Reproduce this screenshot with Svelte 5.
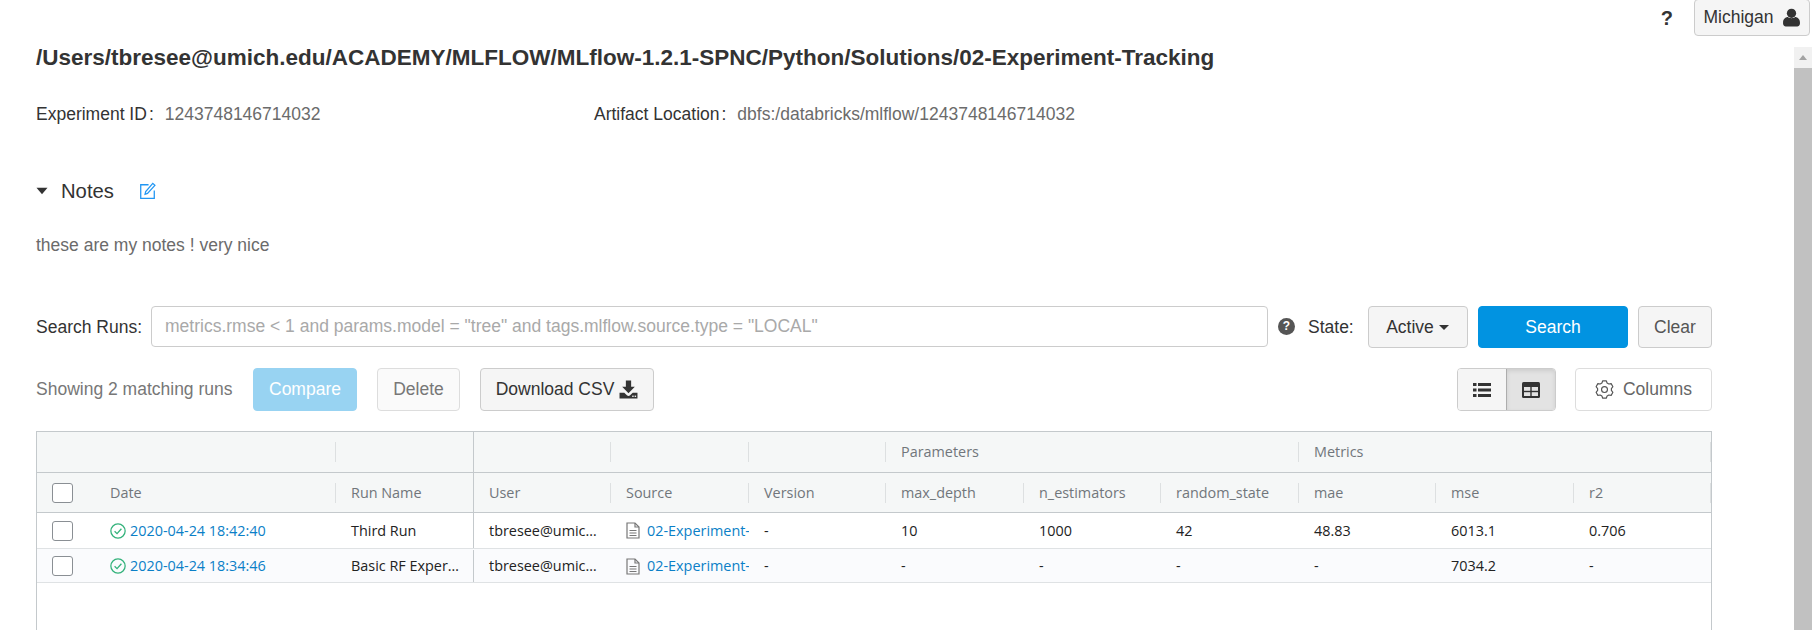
<script>
  const groupCols = [
    { label: '' }, { label: '', strong: true }, { label: '' }, { label: '' }, { label: '' },
    { label: 'Parameters' }, { label: 'Metrics' }
  ];
  const cols = ['Date', 'Run Name', 'User', 'Source', 'Version', 'max_depth', 'n_estimators', 'random_state', 'mae', 'mse', 'r2'];
  const rows = [
    { date: '2020-04-24 18:42:40', name: 'Third Run', vals: ['-', '10', '1000', '42', '48.83', '6013.1', '0.706'] },
    { date: '2020-04-24 18:34:46', name: 'Basic RF Exper…', vals: ['-', '-', '-', '-', '-', '7034.2', '-'] }
  ];
  function gear() {
    let d = '';
    const n = 6;
    for (let i = 0; i < n; i++) {
      const a = (i / n) * Math.PI * 2 + Math.PI / 6;
      const pts = [[-0.38, 6.6], [-0.2, 8.4], [0.2, 8.4], [0.38, 6.6]];
      for (const [o, r] of pts) {
        const x = 9 + r * Math.cos(a + o);
        const y = 9 + r * Math.sin(a + o);
        d += (d ? 'L' : 'M') + x.toFixed(2) + ' ' + y.toFixed(2);
      }
    }
    return d + 'Z';
  }
</script>

<div class="page">
  <header class="topbar">
    <span class="help">?</span>
    <button class="btn user">Michigan
      <svg width="19" height="19" viewBox="0 0 18 18"><circle cx="9" cy="5" r="4.4" fill="#333"/><path d="M1 13.5C1 10.5 3.500 8.500 5.500 8.500C7 10 11 10 12.500 8.500C14.500 8.500 17 10.500 17 13.500V15C17 16.500 15.500 17.500 14.500 17.500H3.500C2.500 17.500 1 16.500 1 15Z" fill="#333"/></svg>
    </button>
  </header>
  <div class="body">
    <main class="main">
      <h1>/Users/tbresee@umich.edu/ACADEMY/MLFLOW/MLflow-1.2.1-SPNC/Python/Solutions/02-Experiment-Tracking</h1>
      <div class="meta">
        <div class="meta-item"><span class="key">Experiment ID</span><span class="colon">:</span><span class="val">1243748146714032</span></div>
        <div class="meta-item"><span class="key">Artifact Location</span><span class="colon">:</span><span class="val">dbfs:/databricks/mlflow/1243748146714032</span></div>
      </div>
      <div class="notes-head">
        <svg class="caret" width="12" height="8" viewBox="0 0 12 8"><path d="M0.500 0.800H11.500L6 7.300Z" fill="#333"/></svg>
        <span class="notes-title">Notes</span>
        <svg class="edit" width="17" height="18" viewBox="0 0 16 17" fill="none" stroke="#2196f3" stroke-width="1.200"><path d="M9 2.600H1.600V15.400H14.400V8"/><path d="M13 1.300L15 3.200L8 10.800L5.700 11.600L6.300 9Z"/></svg>
      </div>
      <p class="notes-text">these are my notes ! very nice</p>

      <div class="search-row">
        <label class="search-label" for="q">Search Runs:</label>
        <input id="q" class="search-input" placeholder={'metrics.rmse < 1 and params.model = "tree" and tags.mlflow.source.type = "LOCAL"'} />
        <span class="qmark">?</span>
        <span class="state">State:</span>
        <button class="btn active">Active<i class="dd"></i></button>
        <button class="btn primary search">Search</button>
        <button class="btn clear">Clear</button>
      </div>

      <div class="action-row">
        <span class="count">Showing 2 matching runs</span>
        <button class="btn primary compare">Compare</button>
        <button class="btn delete">Delete</button>
        <button class="btn download">Download CSV
          <svg width="19" height="19" viewBox="0 0 18 18"><path d="M6.500 0.500H11.500V6.500H15L9 12.500L3 6.500H6.500Z" fill="#333"/><path d="M0.500 12H5L7.500 14.500C8.500 15.300 9.500 15.300 10.500 14.500L13 12H17.500V17.500H0.500Z" fill="#333"/><rect x="12.500" y="14.800" width="1.400" height="1.200" fill="#fff"/><rect x="14.800" y="14.800" width="1.400" height="1.200" fill="#fff"/></svg>
        </button>
        <span class="spacer"></span>
        <div class="toggle">
          <button class="tg" aria-label="List view">
            <svg width="18" height="16" viewBox="0 0 18 16" fill="#333"><rect x="0" y="1" width="3.500" height="3"/><rect x="0" y="6.500" width="3.500" height="3"/><rect x="0" y="12" width="3.500" height="3"/><rect x="5" y="1" width="13" height="3"/><rect x="5" y="6.500" width="13" height="3"/><rect x="5" y="12" width="13" height="3"/></svg>
          </button>
          <button class="tg on" aria-label="Table view">
            <svg width="18" height="16" viewBox="0 0 18 16"><rect x="0" y="0" width="18" height="16" rx="1.500" fill="#333"/><rect x="2" y="5" width="6.300" height="3.800" fill="#e3e3e3"/><rect x="9.700" y="5" width="6.300" height="3.800" fill="#e3e3e3"/><rect x="2" y="10.200" width="6.300" height="3.800" fill="#e3e3e3"/><rect x="9.700" y="10.200" width="6.300" height="3.800" fill="#e3e3e3"/></svg>
          </button>
        </div>
        <button class="btn columns">
          <svg width="19" height="19" viewBox="0 0 18 18" fill="none" stroke="#555" stroke-width="1.100" stroke-linejoin="round"><path d={gear()}/><circle cx="9" cy="9" r="2.800"/></svg>
          Columns
        </button>
      </div>

      <div class="table">
        <div class="grid group">
          {#each groupCols as g}
            <div class="hcell" class:strong={g.strong}>{g.label}</div>
          {/each}
        </div>
        <div class="grid heads">
          <div class="check-cell"><span class="box"></span></div>
          {#each cols as c, i}
            <div class="hcell" class:strong={i === 1}>{c}</div>
          {/each}
        </div>
        {#each rows as r, ri}
          <div class="grid row" class:alt={ri === 1}>
            <div class="check-cell"><span class="box"></span></div>
            <div class="cell date">
              <svg width="16" height="16" viewBox="0 0 15 15" fill="none" stroke="#33b27b" stroke-width="1.200"><circle cx="7.500" cy="7.500" r="6.700"/><path d="M4.300 7.700L6.600 10L10.700 5.400"/></svg>
              <a href="#run">{r.date}</a>
            </div>
            <div class="cell name">{r.name}</div>
            <div class="cell">tbresee@umic…</div>
            <div class="cell src">
              <svg width="14" height="17" viewBox="0 0 14 17" fill="none" stroke="#777" stroke-width="1.200"><path d="M1 1H9L13 5V16H1Z"/><path d="M9 1V5H13M3.500 8.500H10.500M3.500 11H10.500M3.500 13.500H10.500"/></svg>
              <a href="#src">02-Experiment-</a>
            </div>
            {#each r.vals as v}
              <div class="cell">{v}</div>
            {/each}
          </div>
        {/each}
      </div>
    </main>
    <aside class="scrollbar">
      <div class="sb-up"><i></i></div>
      <div class="sb-thumb"></div>
    </aside>
  </div>
</div>

<style>
  :global(body) { margin: 0; background: #fff; }
  .page {
    width: 1812px; height: 630px; overflow: hidden; display: flex; flex-direction: column;
    font-family: "Liberation Sans", Arial, sans-serif; font-size: 17.5px; color: #333;
  }
  .topbar { height: 36px; flex: none; display: flex; justify-content: flex-end; align-items: center; padding-right: 2px; gap: 21px; }
  .help { font-weight: 700; font-size: 20px; color: #333; }
  .btn {
    font: inherit; height: 42px; box-sizing: border-box; border: 1px solid #ccc; border-radius: 4px;
    background: #f5f5f5; color: #333; padding: 0; display: inline-flex; align-items: center; justify-content: center; gap: 6px;
  }
  .user { width: 116px; height: 37px; margin-top: -2px; gap: 8px; }
  .body { flex: 1; display: flex; min-height: 0; }
  .main { flex: 1; min-width: 0; padding: 10px 82px 0 36px; display: flex; flex-direction: column; }
  h1 { margin: 0; font-size: 22.5px; line-height: 24px; font-weight: 700; color: #333; white-space: nowrap; }
  .meta { display: flex; margin-top: 32px; height: 24px; align-items: center; }
  .meta-item { display: flex; align-items: center; }
  .meta-item:first-child { width: 558px; }
  .colon { margin: 0 11px 0 2px; }
  .val { color: #6b6b6b; }
  .notes-head { display: flex; align-items: center; margin-top: 50px; height: 30px; }
  .notes-title { font-size: 20.25px; margin: 0 25px 0 13px; }
  .notes-text { margin: 27px 0 0; line-height: 24px; color: #6b6b6b; }
  .search-row { display: flex; align-items: flex-start; margin-top: 49px; height: 42px; }
  .search-label, .state { line-height: 42px; }
  .search-label { width: 115px; flex: none; }
  .search-input {
    width: 1117px; height: 41px; box-sizing: border-box; border: 1px solid #ccc; border-radius: 4px; padding: 0 13px;
    font: inherit; flex: none; margin-right: 10px; outline: none;
  }
  .search-input::placeholder { color: #a9a9a9; opacity: 1; }
  .qmark {
    width: 17px; height: 17px; margin-top: 12px; border-radius: 50%; background: #555; color: #fff; font-size: 12px; font-weight: 700;
    text-align: center; line-height: 17px; flex: none;
  }
  .state { margin-left: 13px; width: 60px; flex: none; }
  .active { width: 100px; color: #333; padding-right: 1px; gap: 5px; }
  .dd { display: inline-block; border: 5px solid transparent; border-top-color: #333; border-bottom-width: 0; }
  .primary { background: #0193e1; border-color: #0193e1; color: #fff; }
  .search { width: 150px; margin-left: 10px; }
  .clear { width: 74px; margin-left: 10px; color: #555; }
  .action-row { display: flex; align-items: center; margin-top: 20px; height: 43px; }
  .action-row .btn { height: 43px; }
  .count { color: #777; width: 217px; flex: none; }
  .compare { width: 104px; opacity: 0.4; }
  .delete { width: 83px; margin-left: 20px; color: #777; background: #fafafa; border-color: #ddd; }
  .download { width: 174px; margin-left: 20px; gap: 5px; }
  .spacer { flex: 1; }
  .toggle { display: flex; height: 43px; border: 1px solid #ccc; border-radius: 4px; box-sizing: border-box; width: 99px; overflow: hidden; }
  .tg { flex: 1; border: 0; padding: 0; background: #f5f5f5; display: flex; align-items: center; justify-content: center; }
  .tg.on { background: #e3e3e3; border-left: 1px solid #adadad; box-shadow: inset 0 2px 4px rgba(0,0,0,.1); }
  .columns { width: 137px; margin-left: 19px; background: #fff; color: #666; gap: 9px; border-color: #ddd; }
  .table {
    flex: 1; margin-top: 20px; border: 1px solid #c4c9cc; border-bottom: 0; box-sizing: border-box;
    font-family: "Open Sans", "Noto Sans", sans-serif; font-size: 14.4px; color: #222;
  }
  .grid { display: grid; grid-template-columns: 58px 241px 138px 137px 138px 137px 138px 137px 138px 137px 138px 1fr; }
  .group { grid-template-columns: 299px 138px 137px 138px 137px 413px 1fr; background: #f5f7f7; height: 41px; border-bottom: 1px solid #c4c9cc; box-sizing: border-box; align-items: center; }
  .heads { background: #f5f7f7; height: 40px; border-bottom: 1px solid #c4c9cc; box-sizing: border-box; align-items: center; }
  .hcell { color: #71767b; padding-left: 15px; box-sizing: border-box; height: 20px; line-height: 20px; border-right: 1px solid #dde0e1; white-space: nowrap; }
  .hcell.strong { height: calc(100% + 1px); border-right-color: #c4c9cc; display: flex; align-items: center; }
  .row { height: 36px; border-bottom: 1px solid #dfe2e4; box-sizing: border-box; align-items: center; }
  .row.alt { height: 34px; background: #fafbfd; padding-top: 1px; }
  .cell { padding-left: 15px; white-space: nowrap; overflow: hidden; box-sizing: border-box; line-height: 20px; }
  .cell.name { align-self: stretch; display: flex; align-items: center; border-right: 1px solid #c4c9cc; }
  .check-cell { padding-left: 15px; display: flex; align-items: center; }
  .box { width: 21px; height: 20px; box-sizing: border-box; border: 1.500px solid #8a8f94; border-radius: 3px; background: #fff; }
  .date { display: flex; align-items: center; gap: 4px; }
  a { color: #0b7fc7; text-decoration: none; }
  .src { display: flex; align-items: center; gap: 7px; }
  .src svg { flex: none; }
  .scrollbar { width: 18px; flex: none; margin-top: 11px; display: flex; flex-direction: column; background: #f1f1f1; }
  .sb-up { height: 21px; display: flex; align-items: center; justify-content: center; }
  .sb-up i { border: 4.500px solid transparent; border-bottom: 5px solid #a3a3a3; border-top: 0; }
  .sb-thumb { flex: 1; background: #c1c1c1; }
</style>
